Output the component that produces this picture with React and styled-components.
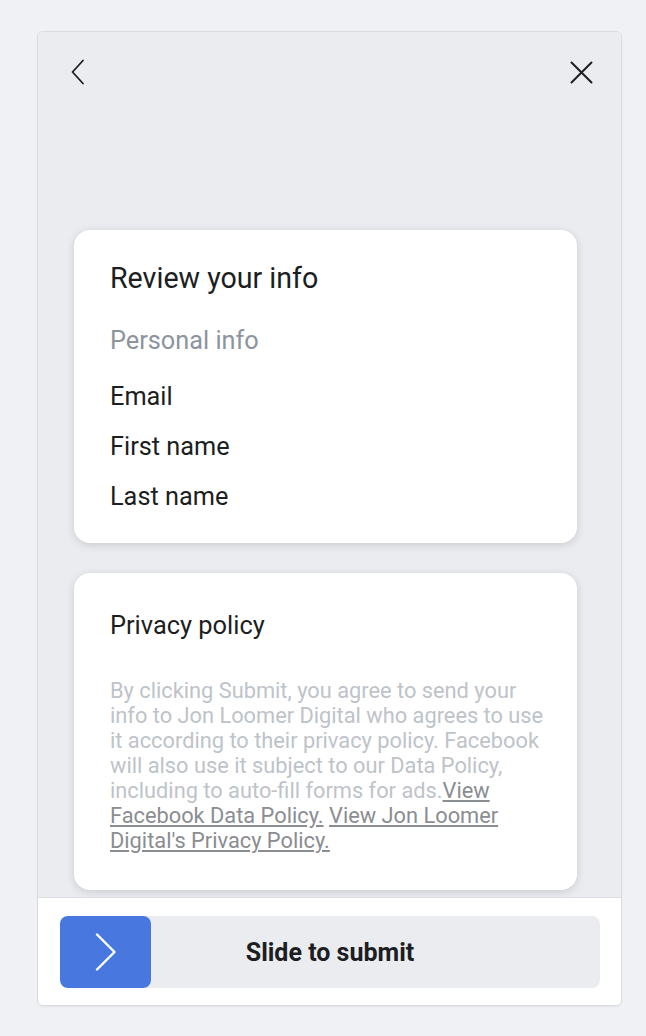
import React from "react";
import styled, { createGlobalStyle } from "styled-components";

const GlobalStyle = createGlobalStyle`
  html, body {
    margin: 0;
    padding: 0;
    background: #f0f1f5;
    font-family: Roboto, "Liberation Sans", Arial, sans-serif;
    -webkit-font-smoothing: antialiased;
  }
`;

const Page = styled.div`
  padding: 31px 24px 30px 37px;
  height: 1036px;
  box-sizing: border-box;
`;

const Frame = styled.div`
  width: 585px;
  height: 975px;
  box-sizing: border-box;
  border: 1px solid #dadce0;
  border-radius: 6px;
  overflow: hidden;
  display: flex;
  flex-direction: column;
  box-shadow: 0 1px 2px rgba(0, 0, 0, 0.06);
`;

const Content = styled.div`
  flex: 1;
  min-height: 0;
  overflow: hidden;
  background: #ebecf0;
  padding: 0 44px 0 36px;
`;

const Header = styled.div`
  height: 198px;
  display: flex;
  justify-content: space-between;
  align-items: flex-start;
  margin: 0 -16px 0 -4px;
`;

const IconButton = styled.button`
  border: none;
  background: none;
  padding: 0;
  margin-top: ${(p) => p.$top}px;
  display: flex;
  color: #1c1e21;
  cursor: pointer;
`;

const Card = styled.section`
  background: #fff;
  border-radius: 16px;
  box-shadow: 0 2px 8px rgba(0, 0, 0, 0.14);
  padding: ${(p) => p.$pad};
  margin-bottom: 30px;
  display: flex;
  flex-direction: column;
`;

const Title = styled.h2`
  margin: 0;
  font-size: ${(p) => (p.$small ? "25.4px" : "28.6px")};
  font-weight: 400;
  line-height: 34px;
  color: #1c1e21;
`;

const SubTitle = styled.div`
  margin-top: 31px;
  font-size: 25.3px;
  line-height: 30px;
  color: #8d949e;
`;

const Fields = styled.div`
  margin-top: 26px;
  display: flex;
  flex-direction: column;
  gap: 20px;
`;

const Field = styled.div`
  font-size: 25.3px;
  line-height: 30px;
  color: #1c1e21;
`;

const Legal = styled.p`
  margin: 36px -8px 0 0;
  font-size: 21.8px;
  line-height: 25px;
  color: #bec3c9;
`;

const LegalLink = styled.a`
  color: #8a8d91;
  text-decoration: underline;
  text-underline-offset: 2px;
  cursor: pointer;
`;

const Footer = styled.div`
  background: #fff;
  border-top: 1px solid #dcdee2;
  padding: 18px 21px 17px 22px;
`;

const Slider = styled.div`
  position: relative;
  height: 72px;
  border-radius: 8px;
  background: #ebecf0;
  display: flex;
  align-items: center;
  justify-content: center;
`;

const Handle = styled.div`
  position: absolute;
  left: 0;
  top: 0;
  width: 91px;
  height: 72px;
  border-radius: 8px;
  background: #4877e0;
  display: flex;
  align-items: center;
  justify-content: center;
`;

const SliderLabel = styled.span`
  font-size: 25px;
  font-weight: 700;
  color: #1c1e21;
`;

function ChevronLeft() {
  return (
    <svg width="16" height="26" viewBox="0 0 16 26" fill="none">
      <path d="M13 1.5 L2.5 13 L13 24.5" stroke="currentColor" strokeWidth="1.8" strokeLinecap="round" strokeLinejoin="round" />
    </svg>
  );
}

function CloseIcon() {
  return (
    <svg width="23" height="23" viewBox="0 0 23 23" fill="none">
      <path d="M1.5 1.5 L21.5 21.5 M21.5 1.5 L1.5 21.5" stroke="currentColor" strokeWidth="2" strokeLinecap="round" />
    </svg>
  );
}

function ChevronRight() {
  return (
    <svg width="22" height="38" viewBox="0 0 22 38" fill="none">
      <path d="M2 1.5 L19.5 19 L2 36.5" stroke="#fff" strokeWidth="2.4" strokeLinecap="round" strokeLinejoin="round" />
    </svg>
  );
}

export default function App() {
  return (
    <>
      <GlobalStyle />
      <Page>
        <Frame>
          <Content>
            <Header>
              <IconButton $top={27} aria-label="Back">
                <ChevronLeft />
              </IconButton>
              <IconButton $top={29} aria-label="Close">
                <CloseIcon />
              </IconButton>
            </Header>

            <Card $pad="31px 36px 31px">
              <Title>Review your info</Title>
              <SubTitle>Personal info</SubTitle>
              <Fields>
                <Field>Email</Field>
                <Field>First name</Field>
                <Field>Last name</Field>
              </Fields>
            </Card>

            <Card $pad="35px 36px 37px">
              <Title $small>Privacy policy</Title>
              <Legal>
                By clicking Submit, you agree to send your info to Jon Loomer
                Digital who agrees to use it according to their privacy policy.
                Facebook will also use it subject to our Data Policy, including
                to auto-fill forms for ads.
                <LegalLink>View Facebook Data Policy.</LegalLink>{" "}
                <LegalLink>View Jon Loomer Digital's Privacy Policy.</LegalLink>
              </Legal>
            </Card>
          </Content>

          <Footer>
            <Slider>
              <Handle>
                <ChevronRight />
              </Handle>
              <SliderLabel>Slide to submit</SliderLabel>
            </Slider>
          </Footer>
        </Frame>
      </Page>
    </>
  );
}
